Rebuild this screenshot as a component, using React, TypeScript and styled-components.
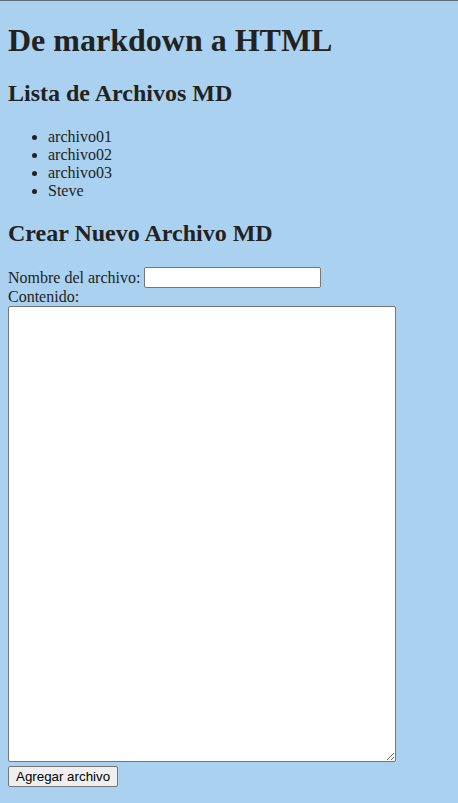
import React from "react";
import styled, { createGlobalStyle } from "styled-components";

const Global = createGlobalStyle`
  html { background: #aad2f0; }
  body {
    margin: 0;
    padding: 0 8px 8px;
    border-top: 1px solid #5f6b75;
    background: #aad2f0;
    color: #222;
    font-family: "Liberation Serif", "Times New Roman", serif;
    font-size: 16px;
  }
`;

const Page = styled.main`
  display: block;
`;

const Title = styled.h1`
  font-size: 32px;
  font-weight: bold;
  margin: 21px 0 21px;
`;

const Subtitle = styled.h2<{ $after?: number }>`
  font-size: 24px;
  font-weight: bold;
  margin: 20px 0 ${(p) => p.$after ?? 20}px;
`;

const FileList = styled.ul`
  margin: 16px 0;
  padding-left: 40px;
  list-style: disc;
`;

const FileItem = styled.li`
  line-height: 18px;
`;

const Form = styled.form`
  display: flex;
  flex-direction: column;
  align-items: flex-start;
`;

const Row = styled.div`
  display: flex;
  align-items: center;
  gap: 4px;
`;

const Label = styled.label`
  line-height: 18px;
`;

const TextInput = styled.input`
  box-sizing: border-box;
  width: 177px;
  height: 21px;
  border: 1px solid #767676;
  border-radius: 2px;
  background: #fff;
  padding: 1px 2px;
  font-family: "Liberation Sans", Arial, sans-serif;
  font-size: 13.33px;
`;

const TextArea = styled.textarea`
  box-sizing: border-box;
  width: 388px;
  height: 456px;
  margin: 0 0 4px;
  border: 1px solid #767676;
  border-radius: 2px;
  background: #fff;
  padding: 2px;
  font-family: "Liberation Mono", monospace;
  font-size: 13.33px;
  display: block;
`;

const Button = styled.button`
  box-sizing: border-box;
  height: 21px;
  padding: 1px 7px;
  border: 1px solid #767676;
  border-radius: 2px;
  background: #efefef;
  color: #000;
  font-family: "Liberation Sans", Arial, sans-serif;
  font-size: 13.33px;
`;

const files = ["archivo01", "archivo02", "archivo03", "Steve"];

export default function App() {
  return (
    <Page>
      <Global />
      <Title>De markdown a HTML</Title>
      <Subtitle $after={21}>Lista de Archivos MD</Subtitle>
      <FileList>
        {files.map((f) => (
          <FileItem key={f}>{f}</FileItem>
        ))}
      </FileList>
      <Subtitle>Crear Nuevo Archivo MD</Subtitle>
      <Form onSubmit={(e) => e.preventDefault()}>
        <Row>
          <Label htmlFor="nombre">Nombre del archivo:</Label>
          <TextInput id="nombre" type="text" />
        </Row>
        <Label htmlFor="contenido">Contenido:</Label>
        <TextArea id="contenido" />
        <Button type="submit">Agregar archivo</Button>
      </Form>
    </Page>
  );
}
